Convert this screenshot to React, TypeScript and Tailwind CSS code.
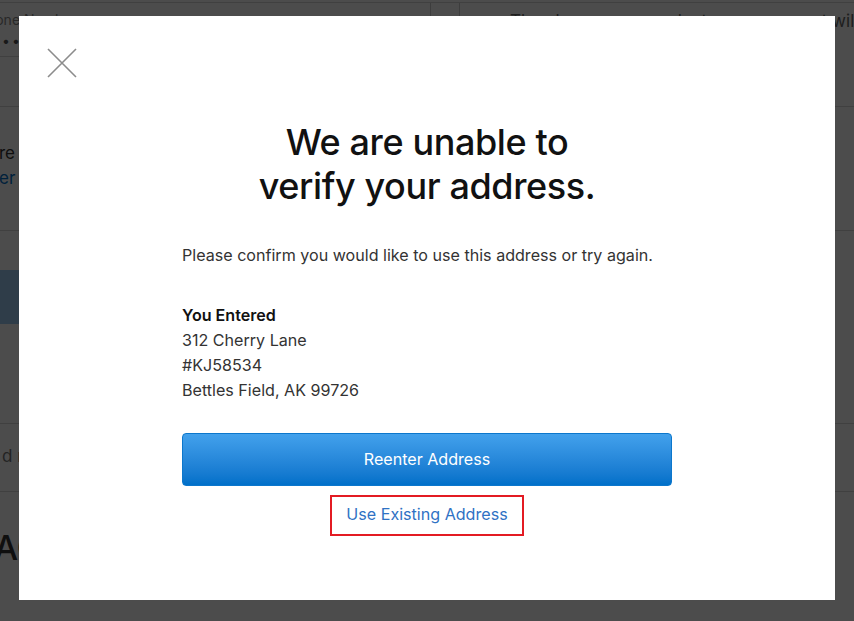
import React from 'react';

// Page behind the dialog: only slivers of it show round the edges.
function BackgroundPage() {
  return (
    <div className="h-[621px] w-[854px] overflow-hidden bg-white font-['Inter',sans-serif] text-[#333]">
      <div className="h-[3px] border-b border-[#d6d6d6]" />
      <div className="flex h-[104px] border-b border-[#d6d6d6]">
        <div className="w-[430px] shrink-0">
          <div className="h-[54px] border-b border-[#d6d6d6]">
            <div className="ml-[-22px] pt-[6px] text-[14px] text-[#888]">Phone Number</div>
            <div className="ml-[2px] text-[14px] tracking-[2px] text-[#555]">••••••••</div>
          </div>
        </div>
        <div className="h-[22px] w-[30px] shrink-0 rounded-b-[4px] border border-t-0 border-[#ccc]" />
        <div className="ml-[50px] shrink-0 whitespace-nowrap pt-[6px] text-[17px] text-[#666]">
          The changes you make to your account will be changed after you save
        </div>
      </div>
      <div className="flex h-[124px] flex-col justify-center border-b border-[#d6d6d6] pb-[6px] text-[17px] leading-[25px]">
        <div className="ml-[-1px]">re</div>
        <div className="ml-[-1px] text-[#0070c9]">er a</div>
      </div>
      <div className="h-[193px] border-b border-[#d6d6d6] pt-[39px]">
        <div className="h-[54px] w-[60px] bg-[#9ecbf5]" />
      </div>
      <div className="flex h-[68px] items-center border-b border-[#d6d6d6] pb-[2px] text-[17px] text-[#777]">
        <div className="ml-[2px]">d r</div>
      </div>
      <div className="pt-[30px] text-[34px] font-medium text-[#333]">
        <div className="ml-[-6px]">AC</div>
      </div>
    </div>
  );
}

function CloseIcon() {
  return (
    <svg width="32" height="32" viewBox="0 0 32 32" fill="none">
      <path d="M2 2 L30 30 M30 2 L2 30" stroke="#8c8c8c" strokeWidth="1.6" />
    </svg>
  );
}

export default function App() {
  return (
    <div className="relative h-[621px] w-[854px] overflow-hidden">
      <BackgroundPage />

      {/* Overlay + dialog */}
      <div className="fixed inset-0 flex justify-center bg-black/[0.7] pt-[16px]">
        <div className="flex h-[584px] w-[816px] flex-col bg-white font-['Inter',sans-serif]">
          <div className="pl-[27px] pt-[31px]">
            <button className="block h-[32px] w-[32px]">
              <CloseIcon />
            </button>
          </div>

          <div className="mx-auto mt-[41px] flex w-[490px] flex-col">
            <h1 className="text-center text-[36px] font-medium leading-[44px] tracking-[-0.4px] text-[#111]">
              We are unable to
              <br />
              verify your address.
            </h1>

            <p className="mt-[35px] text-[16.1px] leading-[25px] text-[#333]">
              Please confirm you would like to use this address or try again.
            </p>

            <div className="mt-[35px] text-[16.1px] leading-[25px] text-[#333]">
              <div className="font-semibold text-[#111]">You Entered</div>
              <div>312 Cherry Lane</div>
              <div>#KJ58534</div>
              <div>Bettles Field, AK 99726</div>
            </div>

            <button className="mt-[30px] h-[53px] w-full rounded-[4px] border border-[#0c77cc] bg-gradient-to-b from-[#42a1ec] to-[#0070c9] text-[16.1px] text-white">
              Reenter Address
            </button>

            <div className="mt-[9px] flex justify-center">
              <div className="flex h-[41px] w-[194px] items-center justify-center border-2 border-[#e31b23] pb-[2px]">
                <a className="text-[16.1px] text-[#2f72c4]">Use Existing Address</a>
              </div>
            </div>
          </div>
        </div>
      </div>
    </div>
  );
}
